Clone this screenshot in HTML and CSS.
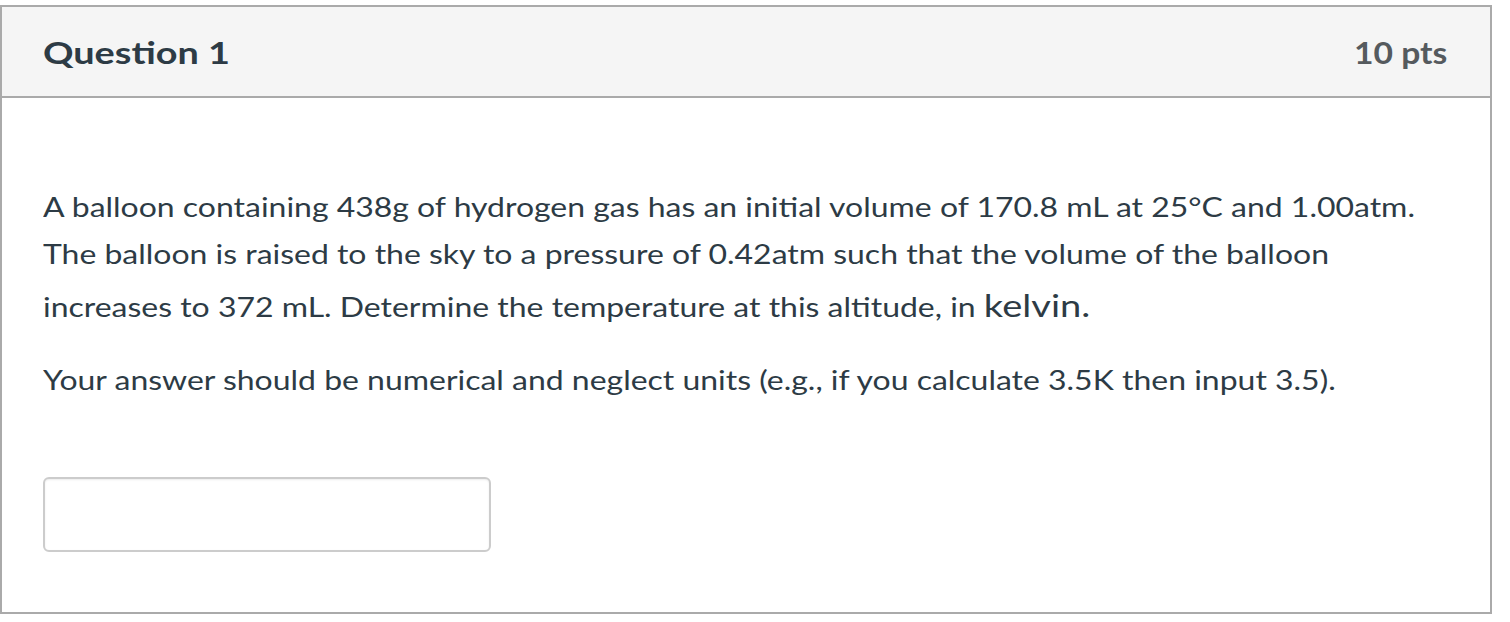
FILE: index.html
```html
<!DOCTYPE html>
<html>
<head>
<meta charset="utf-8">
<link rel="stylesheet" href="styles.css">
</head>
<body>
<div class="question">
  <div class="q-header">
    <h2 class="q-title">Question 1</h2>
    <span class="q-pts">10 pts</span>
  </div>
  <div class="q-body">
    <p class="q-text">A balloon containing 438g of hydrogen gas has an initial volume of 170.8 mL at 25°C and 1.00atm. The balloon is raised to the sky to a pressure of 0.42atm such that the volume of the balloon increases to 372 mL. Determine the temperature at this altitude, in <span class="big">kelvin.</span></p>
    <p class="q-text">Your answer should be numerical and neglect units (e.g., if you calculate 3.5K then input 3.5).</p>
    <input class="answer" type="text">
  </div>
</div>
</body>
</html>
```
FILE: styles.css
```css
html, body {
  margin: 0;
  padding: 0;
  background: #fff;
}
body {
  padding-top: 5px;
  font-family: Lato, "Liberation Sans", sans-serif;
  color: #2d3b45;
}
.question {
  width: 1488px;
  border: 2px solid #aaaaaa;
}
.q-header {
  display: flex;
  justify-content: space-between;
  align-items: center;
  height: 89px;
  padding: 0 43px 0 41px;
  background: #f5f5f5;
  border-bottom: 2px solid #aaaaaa;
}
.q-title {
  margin: 0;
  font-size: 30px;
  font-weight: 700;
  color: #2d3b45;
  transform: scaleX(1.26);
  transform-origin: left center;
}
.q-pts {
  font-size: 30px;
  font-weight: 700;
  color: #555a5e;
  transform: scaleX(1.12);
  transform-origin: right center;
}
.q-body {
  padding: 86px 41px 60px;
}
.q-text {
  width: 1140px;
  margin: 0 0 24px;
  font-size: 26px;
  line-height: 1.8;
  transform: scaleX(1.229);
  transform-origin: left top;
}
.big {
  font-size: 31px;
}
.answer {
  display: block;
  margin-top: 73px;
  width: 448px;
  height: 75px;
  box-sizing: border-box;
  border: 2px solid #cccccc;
  border-radius: 6px;
  box-shadow: inset 0 1px 2px rgba(0,0,0,0.08);
  background: #fff;
}
```
